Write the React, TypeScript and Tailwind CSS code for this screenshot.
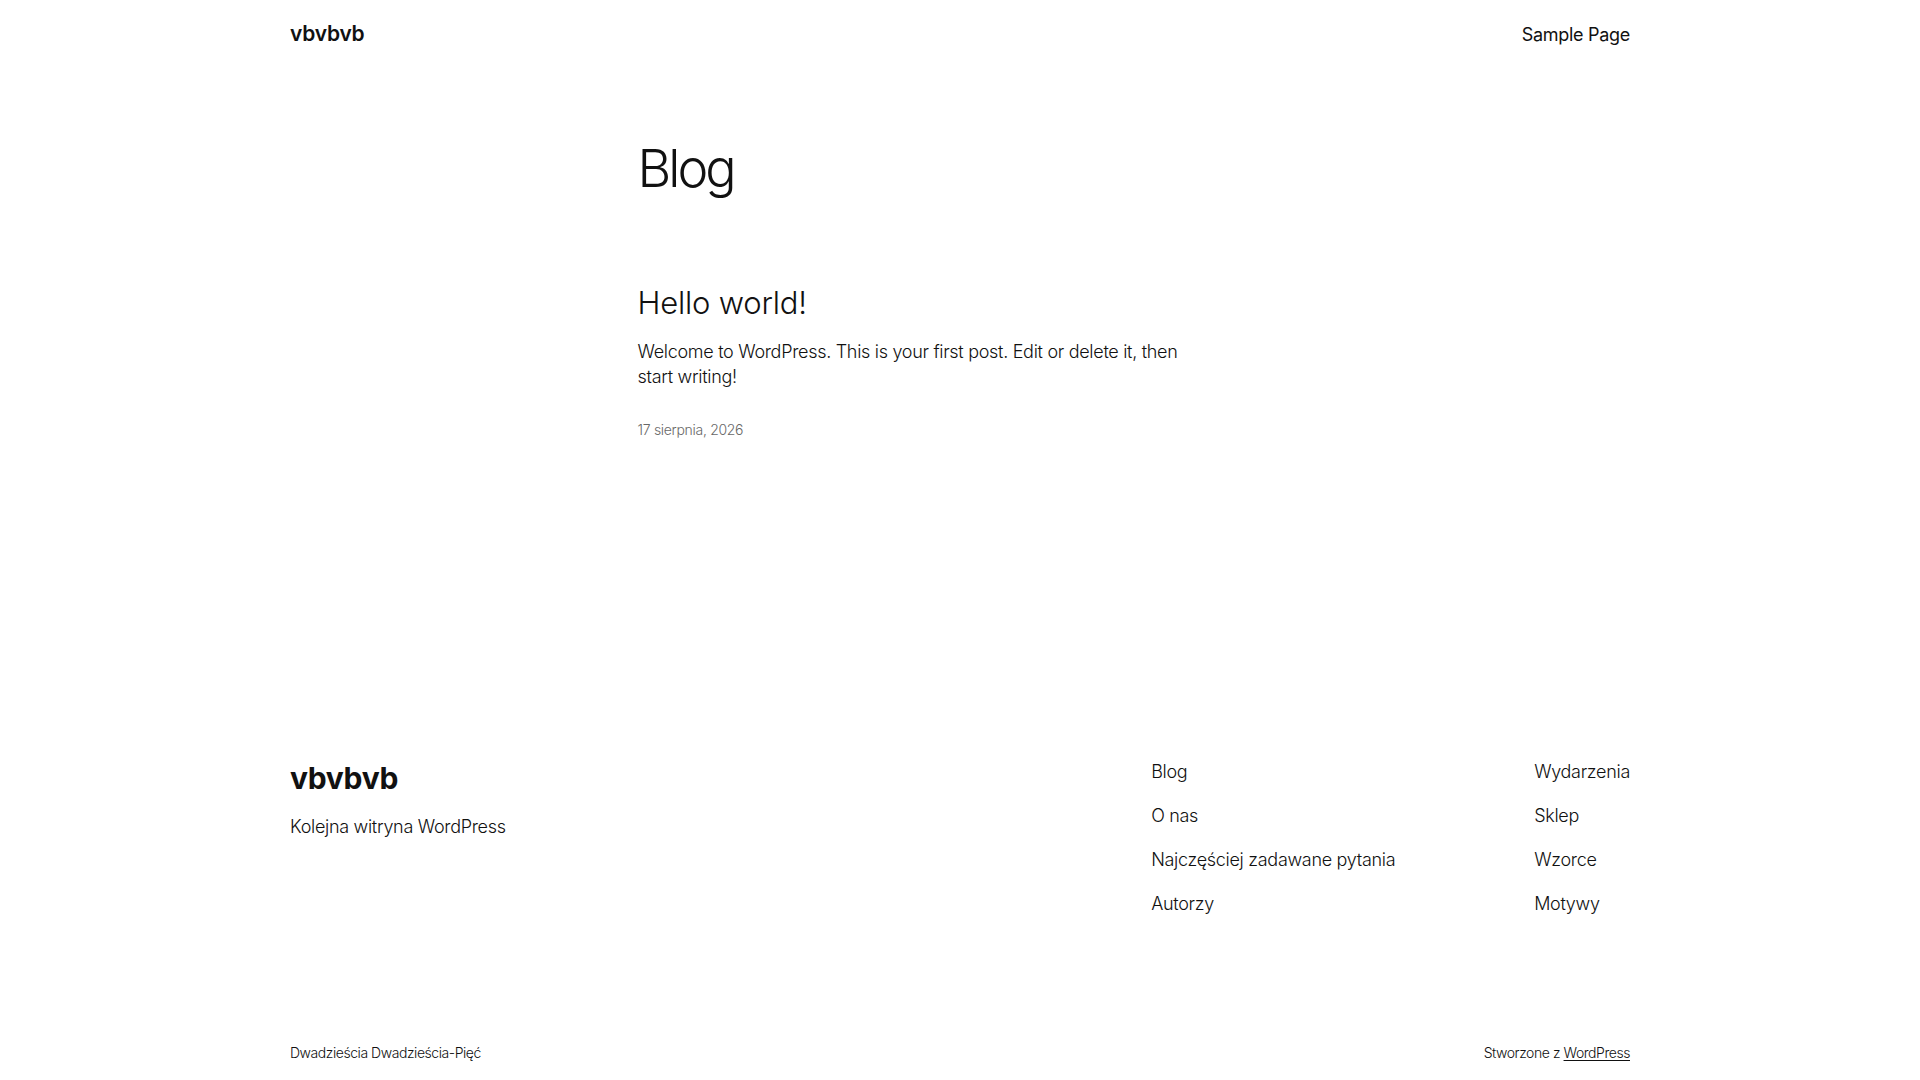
import React from "react";

const FOOTER_NAV_LEFT = ["Blog", "O nas", "Najczęściej zadawane pytania", "Autorzy"];
const FOOTER_NAV_RIGHT = ["Wydarzenia", "Sklep", "Wzorce", "Motywy"];

const App: React.FC = () => {
  return (
    <div className="min-h-[1080px] bg-white text-[#111111] font-['Inter','Noto_Sans',sans-serif]">
      {/* Header */}
      <header className="mx-auto flex h-[68px] w-[1340px] items-center justify-between">
        <a className="text-[21px] font-semibold tracking-[-0.2px]">vbvbvb</a>
        <nav className="text-[18px] tracking-[-0.3px]">
          <a>Sample Page</a>
        </nav>
      </header>

      {/* Main */}
      <main className="mx-auto w-[645px]">
        <h1 className="mt-[70px] text-[52px] leading-[62px] font-light tracking-[-3px]">Blog</h1>

        <article className="mt-[85px]">
          <h2 className="text-[31px] leading-[36px] font-light tracking-[-0.2px]">Hello world!</h2>
          <p className="mt-[18px] w-[570px] text-[18px] leading-[25px] font-light tracking-[-0.3px]">
            Welcome to WordPress. This is your first post. Edit or delete it, then start writing!
          </p>
          <div className="mt-[31px] text-[14px] leading-[20px] font-light text-[#686868] tracking-[-0.3px]">
            17 sierpnia, 2026
          </div>
        </article>
      </main>

      {/* Footer */}
      <footer className="mx-auto w-[1340px]">
        <div className="mt-[319px] flex justify-between">
          <div>
            <div className="mt-[2px] text-[30px] leading-[34px] font-bold tracking-[-0.3px]">vbvbvb</div>
            <p className="mt-[19px] text-[18px] leading-[25px] font-light tracking-[-0.3px]">
              Kolejna witryna WordPress
            </p>
          </div>
          <div className="flex">
            <ul className="flex w-[383px] flex-col gap-[19px] text-[18px] leading-[25px] font-light tracking-[-0.3px]">
              {FOOTER_NAV_LEFT.map((item) => (
                <li key={item}>{item}</li>
              ))}
            </ul>
            <ul className="flex flex-col gap-[19px] text-[18px] leading-[25px] font-light tracking-[-0.3px]">
              {FOOTER_NAV_RIGHT.map((item) => (
                <li key={item}>{item}</li>
              ))}
            </ul>
          </div>
        </div>

        <div className="mt-[127px] flex items-center justify-between pb-[17px] text-[14px] leading-[20px] font-light tracking-[-0.45px]">
          <span>Dwadzieścia Dwadzieścia-Pięć</span>
          <span>
            Stworzone z <a className="underline underline-offset-2">WordPress</a>
          </span>
        </div>
      </footer>
    </div>
  );
};

export default App;
